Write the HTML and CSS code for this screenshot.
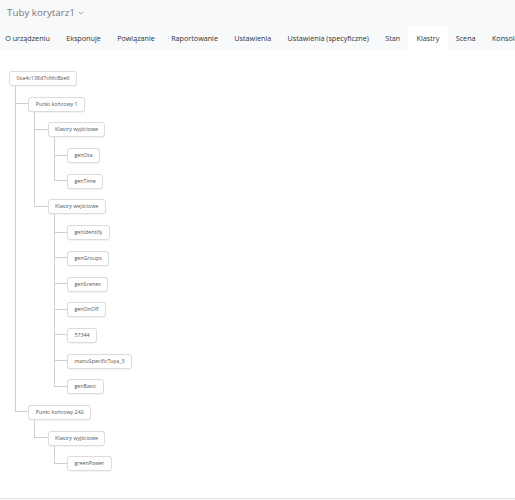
FILE: index.html
```html
<!DOCTYPE html>
<html>
<head>
<meta charset="utf-8">
<link rel="stylesheet" href="styles.css">
</head>
<body>
<header class="top">
  <div class="title">Tuby korytarz1 <span class="chev"><svg width="6" height="4" viewBox="0 0 6 4"><path d="M0.8 0.8 L3 3 L5.2 0.8" fill="none" stroke="#999" stroke-width="0.9"/></svg></span></div>
  <nav class="tabs">
    <a class="tab">O urządzeniu</a>
    <a class="tab">Eksponuje</a>
    <a class="tab">Powiązanie</a>
    <a class="tab">Raportowanie</a>
    <a class="tab">Ustawienia</a>
    <a class="tab">Ustawienia (specyficzne)</a>
    <a class="tab">Stan</a>
    <a class="tab active">Klastry</a>
    <a class="tab">Scena</a>
    <a class="tab">Konsola</a>
  </nav>
</header>
<main class="content">
  <ul class="tree">
    <li class="root"><span class="node">0xa4c138d7c66c8be6</span>
      <ul>
        <li><span class="node">Punkt końcowy 1</span>
          <ul>
            <li><span class="node">Klastry wyjściowe</span>
              <ul>
                <li><span class="node">genOta</span></li>
                <li><span class="node">genTime</span></li>
              </ul>
            </li>
            <li><span class="node">Klastry wejściowe</span>
              <ul>
                <li><span class="node">genIdentify</span></li>
                <li><span class="node">genGroups</span></li>
                <li><span class="node">genScenes</span></li>
                <li><span class="node">genOnOff</span></li>
                <li><span class="node">57344</span></li>
                <li><span class="node">manuSpecificTuya_3</span></li>
                <li><span class="node">genBasic</span></li>
              </ul>
            </li>
          </ul>
        </li>
        <li><span class="node">Punkt końcowy 242</span>
          <ul>
            <li><span class="node">Klastry wyjściowe</span>
              <ul>
                <li><span class="node">greenPower</span></li>
              </ul>
            </li>
          </ul>
        </li>
      </ul>
    </li>
  </ul>
</main>
</body>
</html>
```
FILE: styles.css
```css
html, body {
  margin: 0;
  padding: 0;
  background: #fff;
  overflow: hidden;
  height: 500px;
  font-family: "Open Sans", "Noto Sans", sans-serif;
}
.top {
  background: #f8f9fa;
}
.title {
  height: 25px;
  padding-left: 7px;
  font-size: 9.8px;
  line-height: 22px;
  color: #777;
  display: flex;
  align-items: center;
  gap: 3px;
}
.chev {
  display: inline-flex;
  align-items: center;
  padding-top: 1px;
}
.tabs {
  display: flex;
  height: 25px;
  margin-left: -3px;
  white-space: nowrap;
}
.tab {
  display: flex;
  align-items: center;
  padding: 0 8.2px;
  font-size: 7.2px;
  color: #333;
}
.tab.active {
  background: #fff;
}
.content {
  height: 449px;
  box-sizing: border-box;
  border-bottom: 1px solid #e3e3e3;
}
.tree, .tree ul {
  list-style: none;
  margin: 0;
  padding: 0;
}
.tree {
  padding: 21px 0 0 9px;
}
.tree ul {
  padding-left: 19.3px;
}
.tree ul li {
  position: relative;
  padding-top: 10.7px;
}
.tree ul li::before {
  content: "";
  position: absolute;
  left: -13.3px;
  top: 0;
  width: 13.3px;
  height: 18.2px;
  border-left: 1px solid #cfcfcf;
  border-bottom: 1px solid #cfcfcf;
  box-sizing: border-box;
}
.tree ul li:not(:last-child)::after {
  content: "";
  position: absolute;
  left: -13.3px;
  top: 0;
  bottom: 0;
  border-left: 1px solid #cfcfcf;
}
.node {
  display: block;
  width: max-content;
  height: 15px;
  box-sizing: border-box;
  padding: 0 6.5px;
  border: 1px solid #dcdcdc;
  border-radius: 3px;
  font-size: 5.3px;
  line-height: 13px;
  color: #555;
  background: #fff;
  box-shadow: 0 0.5px 1px rgba(0,0,0,0.05);
}
```
